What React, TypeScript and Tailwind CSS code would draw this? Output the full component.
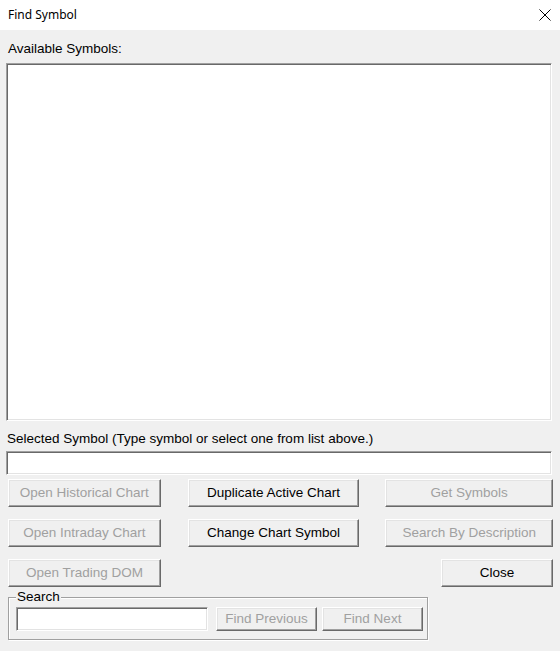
import React from "react"

const raised =
  "border border-t-white border-l-white border-r-[#696969] border-b-[#696969] shadow-[inset_-1px_-1px_0_#a0a0a0,inset_1px_1px_0_#e3e3e3] bg-[#f0f0f0]"
const sunken =
  "border border-t-[#a0a0a0] border-l-[#a0a0a0] border-r-white border-b-white shadow-[inset_1px_1px_0_#696969,inset_-1px_-1px_0_#e3e3e3] bg-white"

const Btn = ({
  label,
  disabled,
  small,
  className = "",
}: {
  label: string
  disabled?: boolean
  small?: boolean
  className?: string
}) => (
  <div
    className={`${raised} ${small ? "h-[24px]" : "h-[28px]"} flex items-center justify-center text-[13.5px] ${
      disabled ? "text-[#a0a0a0]" : "text-black"
    } ${className}`}
  >
    {label}
  </div>
)

export default function App() {
  return (
    <div
      className="w-[560px] h-[651px] bg-[#f0f0f0] overflow-hidden text-black"
      style={{ fontFamily: '"Liberation Sans", Arial, sans-serif' }}
    >
      {/* Title bar */}
      <div className="h-[30px] bg-white flex items-center justify-between pl-[8px] pr-[9px]">
        <span className="text-[12px] leading-none" style={{ fontFamily: '"Noto Sans", sans-serif' }}>
          Find Symbol
        </span>
        <svg width="12" height="12" viewBox="0 0 12 12">
          <path d="M0.5 0.5 L11.5 11.5 M11.5 0.5 L0.5 11.5" stroke="#000" strokeWidth="1" />
        </svg>
      </div>

      <div className="pl-[6px] pr-[8px]">
        <div className="mt-[11px] h-[15px] pl-[2px] text-[13.5px] leading-[15px]">Available Symbols:</div>
        <div className={`${sunken} mt-[7px] h-[358px] w-[546px]`} />

        <div className="mt-[10px] h-[15px] pl-[1px] text-[13.5px] leading-[15px]">
          Selected Symbol (Type symbol or select one from list above.)
        </div>
        <div className={`${sunken} mt-[5px] h-[24px] w-[546px]`} />
      </div>

      {/* Buttons */}
      <div className="mt-[4px] pl-[8px] pr-[7px] flex flex-col gap-[12px]">
        <div className="flex">
          <Btn label="Open Historical Chart" disabled className="w-[153px]" />
          <Btn label="Duplicate Active Chart" className="ml-[27px] w-[172px]" />
          <Btn label="Get Symbols" disabled className="ml-[26px] w-[168px]" />
        </div>
        <div className="flex">
          <Btn label="Open Intraday Chart" disabled className="w-[153px]" />
          <Btn label="Change Chart Symbol" className="ml-[27px] w-[172px]" />
          <Btn label="Search By Description" disabled className="ml-[26px] w-[168px]" />
        </div>
        <div className="flex">
          <Btn label="Open Trading DOM" disabled className="w-[153px]" />
          <Btn label="Close" className="ml-auto w-[112px]" />
        </div>
      </div>

      {/* Search group */}
      <div className="relative mt-[10px] ml-[8px] w-[420px] h-[43px] border border-[#a0a0a0] shadow-[inset_1px_1px_0_#fff,1px_1px_0_#fff]">
        <span className="absolute left-[7px] -top-[9px] bg-[#f0f0f0] px-[1px] text-[13.5px] leading-[15px]">
          Search
        </span>
        <div className="flex pl-[7px] pt-[9px]">
          <div className={`${sunken} h-[24px] w-[192px]`} />
          <Btn label="Find Previous" disabled small className="ml-[8px] w-[101px]" />
          <Btn label="Find Next" disabled small className="ml-[5px] w-[101px]" />
        </div>
      </div>
    </div>
  )
}
